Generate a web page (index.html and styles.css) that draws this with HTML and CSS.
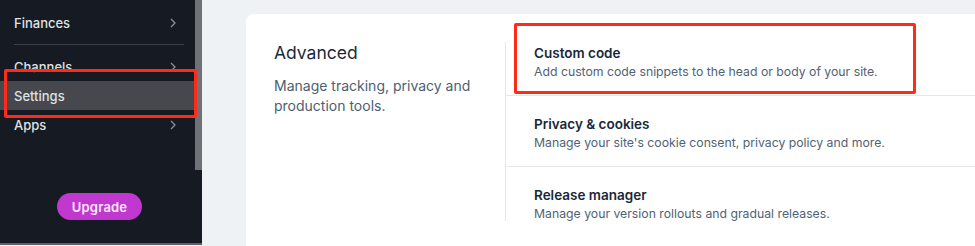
FILE: index.html
```html
<!DOCTYPE html>
<html lang="en">
<head>
    <meta charset="UTF-8">
    <meta name="viewport" content="width=device-width, initial-scale=1.0">
    <title>Settings</title>
    <link rel="stylesheet" href="styles.css">
</head>
<body>
    <div class="layout">
        <aside class="sidebar">
            <nav class="nav">
                <div class="nav-item">
                    <span>Finances</span>
                    <svg class="chevron" viewBox="0 0 8 12"><polyline points="2,2 6,6 2,10"/></svg>
                </div>
                <div class="nav-divider"></div>
                <div class="nav-item">
                    <span>Channels</span>
                    <svg class="chevron" viewBox="0 0 8 12"><polyline points="2,2 6,6 2,10"/></svg>
                </div>
                <div class="nav-item active">
                    <span>Settings</span>
                    <div class="mark mark-nav"></div>
                </div>
                <div class="nav-item">
                    <span>Apps</span>
                    <svg class="chevron" viewBox="0 0 8 12"><polyline points="2,2 6,6 2,10"/></svg>
                </div>
                <div class="upgrade-wrap">
                    <button class="upgrade">Upgrade</button>
                </div>
            </nav>
            <div class="scrollbar"><div class="scroll-thumb"></div></div>
        </aside>

        <main class="main">
            <section class="card">
                <div class="card-intro">
                    <h2>Advanced</h2>
                    <p>Manage tracking, privacy and production tools.</p>
                </div>
                <div class="card-list">
                    <div class="row">
                        <h3>Custom code</h3>
                        <p>Add custom code snippets to the head or body of your site.</p>
                        <div class="mark mark-row"></div>
                    </div>
                    <div class="row">
                        <h3>Privacy &amp; cookies</h3>
                        <p>Manage your site's cookie consent, privacy policy and more.</p>
                    </div>
                    <div class="row">
                        <h3>Release manager</h3>
                        <p>Manage your version rollouts and gradual releases.</p>
                    </div>
                </div>
            </section>
        </main>
    </div>
</body>
</html>
```

FILE: styles.css
```css
* {
    margin: 0;
    padding: 0;
    box-sizing: border-box;
    font-family: 'Inter', 'Open Sans', sans-serif;
}

body {
    background-color: #eef2f5;
    height: 246px;
    overflow: hidden;
}

.layout {
    display: flex;
    height: 246px;
}

/* sidebar */

.sidebar {
    width: 202px;
    flex-shrink: 0;
    display: flex;
    background-color: #161a22;
    border-bottom: 2px solid #5d6066;
    height: 245px;
}

.nav {
    width: 194px;
    display: flex;
    flex-direction: column;
    padding-top: 8px;
}

.nav-item {
    position: relative;
    display: flex;
    align-items: center;
    justify-content: space-between;
    height: 29px;
    padding: 0 17px 0 14px;
    color: #dfe2e6;
    font-size: 13px;
    font-weight: 500;
}

.nav-item.active {
    background-color: #46484d;
}

.chevron {
    width: 8px;
    height: 12px;
    fill: none;
    stroke: #8b8f96;
    stroke-width: 1.3;
}

.nav-divider {
    height: 1px;
    background-color: #3a3e45;
    margin: 7px 10px 7px 14px;
}

.upgrade-wrap {
    display: flex;
    justify-content: center;
    padding: 54px 52px 0 57px;
}

.upgrade {
    width: 85px;
    height: 27px;
    border: none;
    border-radius: 14px;
    background-color: #c038cf;
    color: #fbe9fc;
    font-size: 13px;
    font-weight: 600;
    letter-spacing: 0.2px;
}

.scrollbar {
    width: 8px;
    padding-left: 1px;
}

.scroll-thumb {
    width: 7px;
    height: 170px;
    background-color: #6e7176;
}

/* red annotation boxes */

.mark {
    position: absolute;
    border: 3px solid #ff2a17;
    border-radius: 2px;
    pointer-events: none;
}

.mark-nav {
    left: 4px;
    top: -12px;
    width: 193px;
    height: 49px;
}

.mark-row {
    left: 8px;
    top: -19px;
    width: 402px;
    height: 71px;
}

/* main */

.main {
    flex: 1;
    padding: 14px 0 0 44px;
}

.card {
    display: flex;
    background-color: #ffffff;
    border-radius: 8px 0 0 0;
    height: 232px;
}

.card-intro {
    width: 259px;
    padding: 28px 20px 0 28px;
}

.card-intro h2 {
    font-size: 17.5px;
    font-weight: 400;
    color: #1b2a38;
    line-height: 22px;
    margin-bottom: 12px;
}

.card-intro p {
    font-size: 14px;
    line-height: 20px;
    color: #4d6072;
}

.card-list {
    flex: 1;
    margin-top: 28px;
    height: 179px;
    border-left: 1px solid #e4e8ec;
}

.row {
    position: relative;
    padding: 19px 28px 14px 28px;
    border-bottom: 1px solid #e4e8ec;
}

.row:first-child {
    padding-top: 2px;
}

.row:last-child {
    border-bottom: none;
    padding-bottom: 0;
}

.row h3 {
    font-size: 13.5px;
    font-weight: 600;
    line-height: 18px;
    color: #18283a;
    margin-bottom: 1px;
}

.row p {
    font-size: 12.25px;
    line-height: 18px;
    color: #4f6375;
}
```
